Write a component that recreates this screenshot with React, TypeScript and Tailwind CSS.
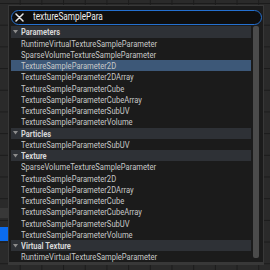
import React from "react";

type Group = { title: string; items: string[] };

const groups: Group[] = [
  {
    title: "Parameters",
    items: [
      "RuntimeVirtualTextureSampleParameter",
      "SparseVolumeTextureSampleParameter",
      "TextureSampleParameter2D",
      "TextureSampleParameter2DArray",
      "TextureSampleParameterCube",
      "TextureSampleParameterCubeArray",
      "TextureSampleParameterSubUV",
      "TextureSampleParameterVolume",
    ],
  },
  { title: "Particles", items: ["TextureSampleParameterSubUV"] },
  {
    title: "Texture",
    items: [
      "SparseVolumeTextureSampleParameter",
      "TextureSampleParameter2D",
      "TextureSampleParameter2DArray",
      "TextureSampleParameterCube",
      "TextureSampleParameterCubeArray",
      "TextureSampleParameterSubUV",
      "TextureSampleParameterVolume",
    ],
  },
  { title: "Virtual Texture", items: ["RuntimeVirtualTextureSampleParameter"] },
];

function Label({ text, className }: { text: string; className: string }) {
  return (
    <span
      className={
        "inline-block origin-left whitespace-nowrap [transform:scaleX(0.8)] " +
        className
      }
    >
      {text}
    </span>
  );
}

export default function App() {
  return (
    <div className="relative w-[270px] h-[270px] overflow-hidden bg-[#2a2a2a] bg-[linear-gradient(to_right,#1b1b1b_1px,transparent_1px),linear-gradient(to_bottom,#1b1b1b_1px,transparent_1px)] bg-[size:21.7px_21.7px] bg-[position:-2px_3px] font-['Roboto',sans-serif]">
      {/* nodes behind the popup on the canvas */}
      <div className="absolute left-0 top-[208px] w-[8px] h-[10px] bg-[#383838]" />
      <div className="absolute left-0 top-[227px] w-[8px] h-[14px] bg-[#0b6cf0]" />

      {/* popup */}
      <div className="absolute left-[8px] top-[5px] w-[256px] h-[260px] bg-[#1b1b1b] border border-[#383838] border-b-[3px] flex flex-col pl-[2px] pt-[4px] overflow-hidden">
        <div className="w-[251px] h-[15px] shrink-0 rounded-full border border-[#2470d0] bg-[#0e0e0e] flex items-center">
          <svg width="9" height="9" viewBox="0 0 9 9" className="ml-[2.5px] shrink-0">
            <path d="M1 1 L8 8 M8 1 L1 8" stroke="#e6e6e6" strokeWidth="1.5" strokeLinecap="round" />
          </svg>
          <Label text="textureSamplePara" className="ml-[9.5px] text-[10.3px] leading-none text-[#f0f0f0]" />
        </div>
        <div className="flex mt-[1.4px] min-h-0 flex-1">
          <div className="w-[240px] flex flex-col">
            {groups.map((g) => (
              <React.Fragment key={g.title}>
                <div className="h-[11.25px] shrink-0 flex items-center bg-[#2e3136] pl-[1.7px]">
                  <svg width="5" height="4" viewBox="0 0 5 4" className="shrink-0">
                    <path d="M0 0 L5 0 L2.5 3.5 Z" fill="#8c8c8c" />
                  </svg>
                  <Label text={g.title} className="ml-[3.3px] text-[9.4px] leading-none font-bold text-[#d6d6d6]" />
                </div>
                {g.items.map((it, i) => {
                  const sel = g.title === "Parameters" && i === 2;
                  return (
                    <div
                      key={g.title + it}
                      className={
                        "h-[11.25px] shrink-0 flex items-center pl-[9.7px] " +
                        (sel ? "bg-[#3d5878]" : "")
                      }
                    >
                      <Label text={it} className="text-[9.5px] leading-none text-[#c8c8c8]" />
                    </div>
                  );
                })}
              </React.Fragment>
            ))}
          </div>
          <div className="ml-[2px] w-[6px] h-[232px] rounded-[2px] bg-[#4b4b4b]" />
        </div>
      </div>
    </div>
  );
}
